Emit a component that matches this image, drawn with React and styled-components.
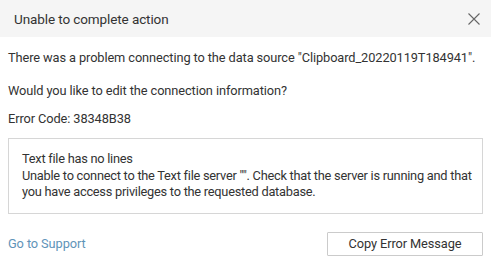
import React from "react";
import styled, { createGlobalStyle } from "styled-components";

const Global = createGlobalStyle`
  html, body { margin: 0; padding: 0; background: #ffffff; }
  body { font-family: Roboto, "Liberation Sans", Arial, sans-serif; }
`;

const Dialog = styled.div`
  width: 491px;
  height: 264px;
  background: #ffffff;
  display: flex;
  flex-direction: column;
  color: #333333;
  font-size: 12.8px;
  letter-spacing: -0.1px;
  overflow: hidden;
`;

const Header = styled.div`
  flex-shrink: 0;
  height: 37px;
  background: #f5f5f5;
  display: flex;
  align-items: center;
  justify-content: space-between;
  padding: 0 7px 0 14px;
  box-sizing: border-box;
`;

const Title = styled.div`
  font-size: 13.5px;
  letter-spacing: -0.1px;
  color: #333333;
  padding-top: 1px;
`;

const CloseButton = styled.button`
  width: 20px;
  height: 20px;
  border: none;
  background: transparent;
  padding: 0;
  display: flex;
  align-items: center;
  justify-content: center;
  cursor: pointer;
`;

const Body = styled.div`
  flex-shrink: 0;
  padding: 0 8px;
  display: flex;
  flex-direction: column;
`;

const Para = styled.p`
  margin: ${(p) => p.$top}px 0 0 0;
  line-height: 16px;
  white-space: nowrap;
`;

const DetailBox = styled.div`
  margin-top: 11px;
  border: 1px solid #d6d6d6;
  padding: 12px 0 12px 13px;
  line-height: 16.5px;
  letter-spacing: -0.25px;
`;

const Footer = styled.div`
  flex-shrink: 0;
  margin-top: 18px;
  padding: 0 8px;
  display: flex;
  align-items: center;
  justify-content: space-between;
`;

const Link = styled.a`
  color: #5f94b9;
  text-decoration: none;
`;

const Button = styled.button`
  width: 156px;
  height: 24px;
  background: #ffffff;
  border: 1px solid #cbcbcb;
  border-radius: 1px;
  font-family: inherit;
  font-size: 12.8px;
  letter-spacing: -0.1px;
  color: #333333;
  padding: 0;
`;

export default function App() {
  return (
    <>
      <Global />
      <Dialog>
        <Header>
          <Title>Unable to complete action</Title>
          <CloseButton aria-label="Close">
            <svg width="12" height="12" viewBox="0 0 12 12">
              <path d="M0.5 0.5 L11.5 11.5 M11.5 0.5 L0.5 11.5" stroke="#666" strokeWidth="1.1" fill="none" />
            </svg>
          </CloseButton>
        </Header>
        <Body>
          <Para $top={13}>There was a problem connecting to the data source "Clipboard_20220119T184941".</Para>
          <Para $top={17}>Would you like to edit the connection information?</Para>
          <Para $top={12}>Error Code: 38348B38</Para>
          <DetailBox>
            Text file has no lines
            <br />
            Unable to connect to the Text file server "". Check that the server is running and that you have access privileges to the requested database.
          </DetailBox>
        </Body>
        <Footer>
          <Link href="#">Go to Support</Link>
          <Button>Copy Error Message</Button>
        </Footer>
      </Dialog>
    </>
  );
}
